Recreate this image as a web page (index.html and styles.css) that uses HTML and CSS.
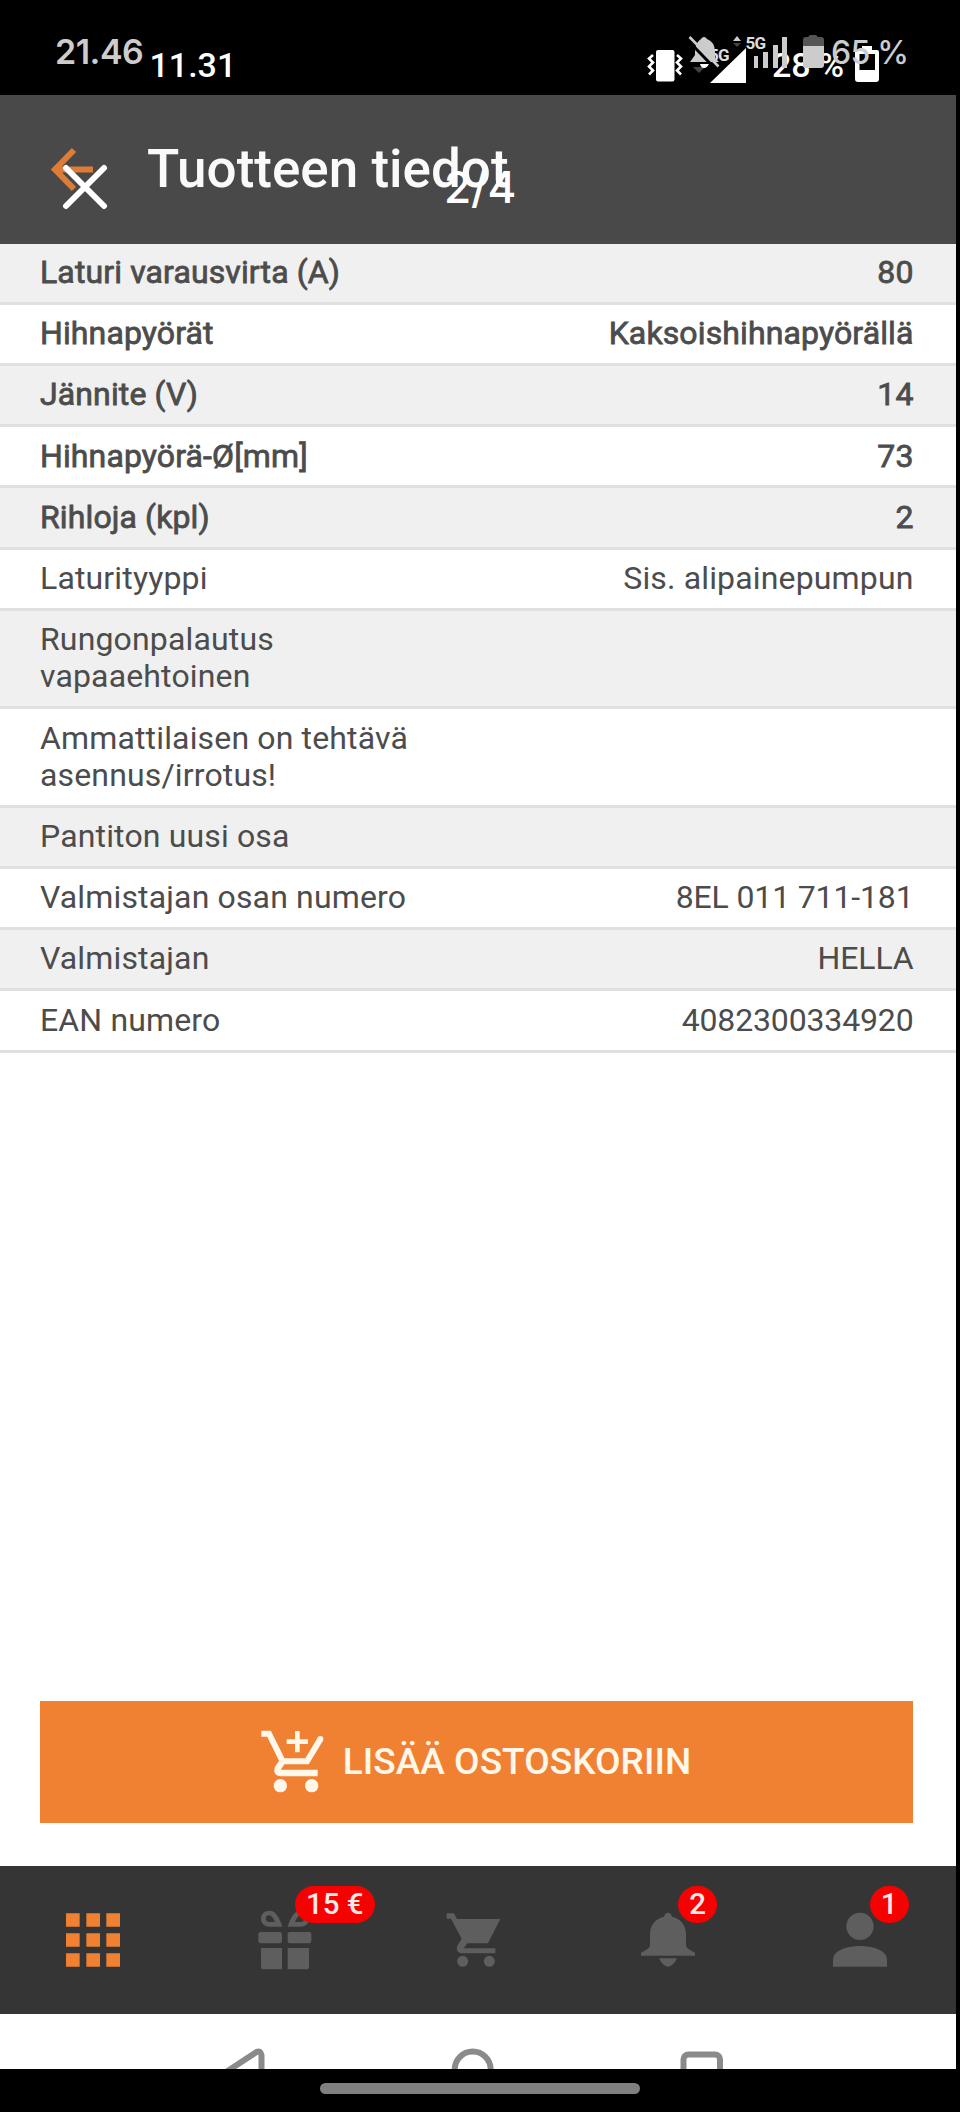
FILE: index.html
```
<!DOCTYPE html>
<html lang="fi">
<head>
<meta charset="utf-8">
<title>Tuotteen tiedot</title>
<link rel="stylesheet" href="styles.css">
</head>
<body>
<div class="device">
  <div class="status-bar">
    <span class="clock">11.31</span>
    <div class="status-right">
      <svg class="status-icons" viewBox="0 0 340 110">
        <rect x="36" y="50" width="18.500" height="31.500" rx="2" fill="#fff"/>
        <path d="M33 55l-4 3.500 4 4-4 4 4 4-4 4M57 55l4 3.500-4 4 4 4-4 4 4 4" fill="none" stroke="#fff" stroke-width="2.600"/>
        <path d="M126 48V83H90z" fill="#fff"/>
        <text x="89" y="60.500" class="net">5G</text>
        <path d="M73 67h12l-6 6z" fill="#444"/>
        <path fill-rule="evenodd" d="M242 46h10v4h5q2 0 2 2v27q0 3-3 3h-18q-3 0-3-3V52q0-2 2-2h5zM239.500 54v16H255V54z" fill="#fff"/>
      </svg>
      <span class="percent">28 %</span>
    </div>
  </div>
  <header class="app-header">
    <svg class="back" viewBox="0 0 44 46"><path d="M23 3L4 22.500 23 42M5 22.500H42" fill="none" stroke="#dd7c36" stroke-width="6"/></svg>
    <h1 class="title">Tuotteen tiedot</h1>
  </header>
  <main class="content">
    <div class="spec strong"><span class="name">Laturi varausvirta (A)</span><span class="value">80</span></div>
    <div class="spec strong"><span class="name">Hihnapyörät</span><span class="value">Kaksoishihnapyörällä</span></div>
    <div class="spec strong"><span class="name">Jännite (V)</span><span class="value">14</span></div>
    <div class="spec strong"><span class="name">Hihnapyörä-Ø[mm]</span><span class="value">73</span></div>
    <div class="spec strong"><span class="name">Rihloja (kpl)</span><span class="value">2</span></div>
    <div class="spec"><span class="name">Laturityyppi</span><span class="value">Sis. alipainepumpun</span></div>
    <div class="spec"><span class="name">Rungonpalautus<br>vapaaehtoinen</span></div>
    <div class="spec"><span class="name">Ammattilaisen on tehtävä<br>asennus/irrotus!</span></div>
    <div class="spec"><span class="name">Pantiton uusi osa</span></div>
    <div class="spec"><span class="name">Valmistajan osan numero</span><span class="value code">8EL 011 711-181</span></div>
    <div class="spec"><span class="name">Valmistajan</span><span class="value code">HELLA</span></div>
    <div class="spec"><span class="name">EAN numero</span><span class="value code">4082300334920</span></div>
  </main>
  <div class="actions">
    <button class="add-button">
      <svg class="add-icon" viewBox="780 210 200 200" fill="none" stroke="#fff8ea">
        <path d="M784 227h23l41 83h73l41-68" stroke-width="18"/>
        <circle cx="961" cy="243" r="5" stroke-width="8"/>
        <path d="M850 306l-17 26q-4 13 8 13h112" stroke-width="19"/>
        <path d="M860 251h64M892 219v64" stroke-width="14"/>
        <circle cx="841" cy="383" r="20" fill="#fff8ea" stroke="none"/>
        <circle cx="935" cy="383" r="20" fill="#fff8ea" stroke="none"/>
      </svg>
      <span class="add-label">LISÄÄ OSTOSKORIIN</span>
    </button>
  </div>
  <nav class="tabs">
    <div class="tab active">
      <svg class="tab-icon" viewBox="-108 -108 216 216"><path d="M-81-80h41v40h-41zM-20-80h41v40h-41zM40-80h41v40H40zM-81-20h41v40h-41zM-20-20h41v40h-41zM40-20h41v40H40zM-81 40h41v40h-41zM-20 40h41v40h-41zM40 40h41v40H40z"/></svg>
    </div>
    <div class="tab">
      <svg class="tab-icon" viewBox="-108 -108 216 216">
        <rect x="-80" y="-24" width="71" height="34" rx="7"/><rect x="8" y="-24" width="71" height="34" rx="7"/>
        <path d="M-72 24h63v64h-55q-8 0-8-8zM8 24h64v56q0 8-8 8H8z"/>
        <path fill-rule="evenodd" d="M-8-40h-36c-18 0-28-10-28-24s10-24 26-24c20 0 30 24 38 48zM-30-54c-5-11-10-20-18-20-6 0-10 4-10 10s5 10 12 10zM8-40h36c18 0 28-10 28-24s-10-24-26-24c-20 0-30 24-38 48zM30-54c5-11 10-20 18-20 6 0 10 4 10 10s-5 10-12 10z"/>
      </svg>
      <span class="badge">15 €</span>
    </div>
    <div class="tab">
      <svg class="tab-icon" viewBox="-108 -108 216 216"><path d="M-88-80h22l9 17H73L36 10H-26L-37 25H58V40H-38c-18 0-24-13-16-26l11-18L-75-64h-13z"/><circle cx="-40" cy="64" r="16.500"/><circle cx="40" cy="64" r="16.500"/></svg>
    </div>
    <div class="tab">
      <svg class="tab-icon" viewBox="-108 -108 216 216"><path d="M0-82q9 0 12 12c28 6 42 28 42 52v36q4 10 27 20v9H-81v-9q23-10 27-20v-36c0-24 14-46 42-52q3-12 12-12zM-27 55h54Q15 80 0 80T-27 55z"/></svg>
      <span class="badge">2</span>
    </div>
    <div class="tab">
      <svg class="tab-icon" viewBox="-108 -108 216 216"><circle cy="-41" r="41"/><path d="M-81 80V59C-81 31-37 18 0 18s81 13 81 41v21z"/></svg>
      <span class="badge">1</span>
    </div>
  </nav>
  <div class="system-nav">
    <svg class="system-icons" viewBox="0 0 956 55" fill="none" stroke="#8a8a8a" stroke-width="6">
      <path d="M261.500 100V41q-1-5-5-3L214 66" stroke-linejoin="round"/>
      <circle cx="472.700" cy="55.500" r="18"/>
      <rect x="683.500" y="40.500" width="36.500" height="40" rx="5"/>
    </svg>
  </div>
  <div class="gesture-bar"><div class="pill"></div></div>

  <div class="viewer-overlay">
    <span class="viewer-clock">21.46</span>
    <svg class="viewer-icons" viewBox="0 0 340 110" fill="#ccc">
      <path d="M84 37q2 0 3 2 8 3 8 13v6l4 4H70l5-7v-4q0-8 6-12 1-2 3-2z"/>
      <path d="M80 64h9q-2 4-5 4t-4-4z" fill="#fff"/>
      <path d="M67 39.500l29 30" stroke="#000" stroke-width="3"/>
      <path d="M69.500 37l29 29.500" stroke="#ccc" stroke-width="2.600"/>
      <path d="M113 41l4-5 4 5z"/><path d="M113 43h8l-4 4z" fill="#444"/>
      <text x="125.500" y="48.500" class="net">5G</text>
      <path d="M134 56h4v12h-4zM143 52h5v16h-5zM153 45h5v23h-5zM162 37h5v31h-5z"/>
      <path d="M183 46v-6q0-3 3-3h2l2-2h6l2 2h3q3 0 3 3v6z" fill="#555"/>
      <path d="M183 46h21v19q0 3-3 3h-15q-3 0-3-3z"/>
    </svg>
    <span class="viewer-percent">65 %</span>
    <svg class="close" viewBox="0 0 46 46"><path d="M4 4l38 38M42 4L4 42" stroke="#fff" stroke-width="6" stroke-linecap="round"/></svg>
    <span class="counter">2/4</span>
  </div>
</div>
</body>
</html>
```

FILE: styles.css
```
* { box-sizing: border-box; }

body {
  margin: 0;
  background: #000;
  font-family: Roboto, "Liberation Sans", sans-serif;
}

.device {
  position: relative;
  display: flex;
  flex-direction: column;
  width: 960px;
  height: 2112px;
  padding-right: 4px;
  overflow: hidden;
}

.status-bar {
  display: flex;
  justify-content: space-between;
  height: 94.500px;
  flex: none;
  padding-left: 149.500px;
  color: #fff;
  font-size: 34px;
  font-weight: 500;
}

.clock { padding-top: 45px; line-height: 40px; }
.status-right { position: relative; width: 336px; }
.status-icons { position: absolute; left: 0; top: 0; width: 340px; height: 110px; }
.percent { position: absolute; left: 152px; top: 45px; line-height: 40px; letter-spacing: 0; white-space: nowrap; }
.net { font: 700 17px Roboto, sans-serif; fill: #ddd; letter-spacing: -0.800px; }

.app-header {
  display: flex;
  flex: none;
  height: 149px;
  padding-left: 51px;
  background: #494949;
}

.back { width: 44px; height: 46px; margin-top: 52px; }
.title { margin: 42px 0 0 52px; color: #fafafa; font-size: 53px; font-weight: 500; line-height: 64px; letter-spacing: 0; }

.content { flex: 1; min-height: 0; background: #fff; }

.spec {
  display: flex;
  justify-content: space-between;
  padding: 10.400px 42.500px 10.750px 40px;
  border-bottom: 3px solid #e0e0e0;
  color: #4c4c4c;
  font-size: 32px;
  line-height: 37.100px;
  letter-spacing: 0.150px;
  white-space: nowrap;
}

.spec:nth-child(odd) { background: #f0f0f0; }
.code { letter-spacing: -0.150px; }
.strong { letter-spacing: 0.120px; -webkit-text-stroke: 0.800px #4c4c4c; }

.actions {
  flex: none;
  height: 165px;
  padding: 0 43px 43px 40px;
  background: #fff;
}

.add-button {
  display: flex;
  align-items: center;
  width: 100%;
  height: 122px;
  border: 0;
  padding: 0 0 0 220px;
  margin: 0;
  background: #f08133;
  font-family: inherit;
}

.add-icon { width: 66.700px; height: 66.700px; }
.add-label { margin-left: 16px; color: #fff8ea; font-size: 37px; font-weight: 500; letter-spacing: 0.050px; }

.tabs {
  display: flex;
  flex: none;
  height: 148.500px;
  background: #353535;
}

.tab { position: relative; display: flex; flex: none; align-items: center; justify-content: center; width: 191.600px; fill: #5e5e5e; }
.tab:first-child { margin-left: -2.500px; }
.active { fill: #f08133; }
.tab-icon { width: 72px; height: 72px; }

.badge {
  position: absolute;
  left: calc(50% + 10px);
  top: 20px;
  min-width: 39px;
  height: 37px;
  padding: 0 11px;
  border-radius: 19px;
  background: #f70000;
  color: #ffe8e8;
  font-size: 29.500px;
  font-weight: 500;
  line-height: 36px;
  text-align: center;
  white-space: nowrap;
}

.system-nav { flex: none; height: 55px; background: #fff; }
.system-icons { display: block; width: 956px; height: 55px; }
.gesture-bar { display: flex; flex: none; justify-content: center; height: 43px; width: 960px; padding-top: 14px; background: #000; }
.pill { width: 320px; height: 11px; border-radius: 6px; background: #808080; }

.viewer-overlay { position: absolute; inset: 0; font-family: Inter, sans-serif; font-weight: 600; pointer-events: none; }
.viewer-clock { position: absolute; left: 55px; top: 32px; color: #ccc; font-size: 34px; line-height: 40px; letter-spacing: -0.500px; }
.viewer-icons { position: absolute; left: 620px; top: 0; width: 340px; height: 110px; }
.viewer-percent { position: absolute; left: 831px; top: 33px; color: #ccc; font-size: 32px; font-weight: 500; line-height: 40px; letter-spacing: -0.700px; white-space: nowrap; }
.close { position: absolute; left: 62px; top: 164px; width: 46px; height: 46px; }
.counter { position: absolute; left: 444px; top: 162px; color: #fff; font-size: 44px; font-weight: 500; line-height: 50px; }
```
